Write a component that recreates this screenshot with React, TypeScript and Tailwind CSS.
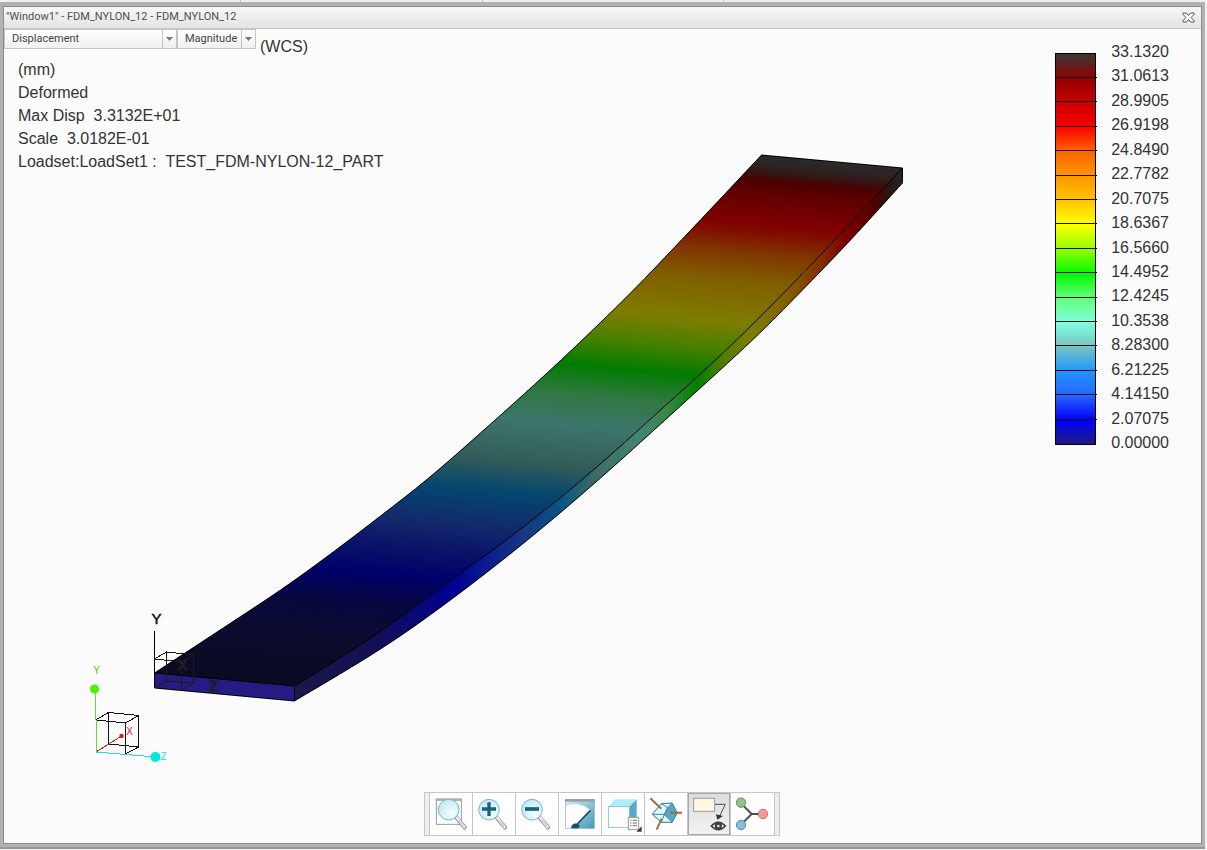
import React from "react";

type Point = [number, number];

const LEFT_EDGE: Point[] = [
  [154, 673], [215, 633], [280, 590], [330, 554], [380, 516], [427, 479],
  [480, 433], [552, 368], [623, 300], [680, 241], [761, 155],
];
const RIDGE: Point[] = [
  [294, 686], [370, 638], [460, 573], [507, 539], [580, 481],
  [660, 410], [736, 340], [820, 255], [902, 168],
];
const OUTER_EDGE: Point[] = [
  [294, 701], [380, 649], [450, 600], [527, 540], [600, 478],
  [680, 406], [752, 340], [800, 292], [850, 240], [902, 183],
];

function curve(points: Point[]): string {
  let d = "";
  for (let i = 0; i < points.length - 1; i++) {
    const p0 = points[Math.max(i - 1, 0)];
    const p1 = points[i];
    const p2 = points[i + 1];
    const p3 = points[Math.min(i + 2, points.length - 1)];
    d += ` C${p1[0] + (p2[0] - p0[0]) / 6},${p1[1] + (p2[1] - p0[1]) / 6} ${p2[0] - (p3[0] - p1[0]) / 6},${p2[1] - (p3[1] - p1[1]) / 6} ${p2[0]},${p2[1]}`;
  }
  return d;
}

const leftPath = `M154,673${curve(LEFT_EDGE)}`;
const ridgePath = `M294,686${curve(RIDGE)}`;
const outerPath = `M294,701${curve(OUTER_EDGE)}`;
const topFace = `${leftPath} L902,168${curve([...RIDGE].reverse())} Z`;
const sideFace = `${outerPath} L902,168${curve([...RIDGE].reverse())} Z`;

const TOP_STOPS: [number, string][] = [
  [86, "#2b2b2b"], [95, "#2c2525"], [104, "#341616"], [112, "#4c0000"], [128, "#640000"], [156, "#800000"],
  [166, "#801000"], [186, "#803600"], [216, "#806000"], [257, "#7d7d00"],
  [285, "#488000"], [313, "#007c00"], [342, "#307840"], [373, "#3c766c"],
  [415, "#335c58"], [447, "#04466e"], [483, "#122a6c"], [510, "#0a1468"],
  [539, "#00006a"], [573, "#08083e"], [609, "#0c0c2e"], [660, "#0a0a22"],
];

const SIDE_STOPS: [number, string][] = [
  [294, "#1c1848"], [380, "#120e58"], [453, "#000090"], [480, "#0a1690"], [519, "#163484"],
  [560, "#075484"], [594, "#3c6c68"], [638, "#428474"], [665, "#388848"],
  [696, "#008000"], [725, "#587c00"], [751, "#7d7d00"], [790, "#845a00"],
  [820, "#843000"], [844, "#800000"], [875, "#500000"], [888, "#2a1616"], [902, "#242424"],
];

function Scene() {
  return (
    <svg
      className="pointer-events-none absolute inset-0 h-full w-full"
      viewBox="4 29 1196 814"
      role="img"
      aria-label="Deformed beam displacement plot"
    >
      <defs>
        <linearGradient id="top" gradientUnits="userSpaceOnUse" x1="0" y1="86" x2="-51" y2="655">
          {TOP_STOPS.map(([v, c]) => (
            <stop key={v} offset={(v - 86) / 574} stopColor={c} />
          ))}
        </linearGradient>
        <linearGradient id="side" gradientUnits="userSpaceOnUse" x1="294" y1="0" x2="902" y2="0">
          {SIDE_STOPS.map(([x, c]) => (
            <stop key={x} offset={(x - 294) / 608} stopColor={c} />
          ))}
        </linearGradient>
      </defs>

      <g shapeRendering="crispEdges">
        <path d={topFace} fill="url(#top)" />
        <path d={sideFace} fill="url(#side)" />
        <path d="M154,673 L294,686 V701 L154,688 Z" fill="#241c82" />
      </g>
      <g fill="none" stroke="#000">
        <path d={`${leftPath} L902,168 V183`} />
        <path d={outerPath} />
        <path d={ridgePath} />
        <path d="M154,673 L294,686 V701 L154,688 Z" />
      </g>

      <g stroke="#1a1a1e" fill="none" shapeRendering="crispEdges">
        <path d="M153.500,631 V674" stroke="#000" />
        <path d="M154,659 L166,652 L193,655 L181,662 Z M166,652 V681 L193,683 V655 M181,662 V690 L193,683 M154,688 L166,681" />
      </g>
      <g fontFamily="Liberation Sans, sans-serif" textAnchor="middle">
        <text x="156" y="624" fontSize="15" fill="#111" stroke="#111" strokeWidth="0.500">Y</text>
        <text x="182" y="670" fontSize="14" fill="#222" stroke="#222">X</text>
        <text x="213" y="691" fontSize="14" fill="#1c1c22" stroke="#1c1c22">Z</text>
      </g>

      <g fill="none" shapeRendering="crispEdges">
        <path d="M95,720 L108,712.500 L138,715.500 L125,723 Z M108,713 V744 L138,747 V715 M125,723 V754 L138,747" stroke="#111" />
        <path d="M95.500,752 L121,736" stroke="#d02020" />
        <path d="M95,752 L155,757" stroke="#28dce6" />
        <path d="M94.500,689 V720 M95.500,720 V752" stroke="#5fe030" />
      </g>
      <circle cx="94" cy="689" r="4.500" fill="#4cf200" />
      <circle cx="155" cy="757" r="5" fill="#00e8dc" />
      <circle cx="121" cy="736" r="2.200" fill="#e01818" />
      <g fontFamily="Liberation Sans, sans-serif" fontSize="10" textAnchor="middle">
        <text x="96" y="674" fill="#52cc20">Y</text>
        <text x="129" y="735" fill="#d02020">X</text>
        <text x="163" y="760" fill="#28dce6">Z</text>
      </g>
    </svg>
  );
}

const LEVELS = [
  "33.1320", "31.0613", "28.9905", "26.9198", "24.8490", "22.7782", "20.7075", "18.6367",
  "16.5660", "14.4952", "12.4245", "10.3538", "8.28300", "6.21225", "4.14150", "2.07075", "0.00000",
];

const LEGEND_COLOURS = [
  "#383838", "#900000", "#c80000", "#fa0000", "#ff6400", "#ff9600", "#ffc400", "#ffff00",
  "#96ff00", "#00fa00", "#64ff78", "#80ffe0", "#78c4c4", "#1e96fa", "#2864ff", "#0000fa", "#201c82",
];

function Legend() {
  return (
    <div className="flex gap-[13px] pr-8 pt-[14px]">
      <svg className="mt-[10px] h-[392px] w-[43px]" viewBox="0 0 43 392" shapeRendering="crispEdges" aria-hidden="true">
        <defs>
          <linearGradient id="scale" x1="0" y1="0" x2="0" y2="1">
            {LEGEND_COLOURS.map((c, i) => (
              <stop key={c} offset={i / 16} stopColor={c} />
            ))}
          </linearGradient>
        </defs>
        <rect x="0.500" y="0.500" width="40" height="391" fill="url(#scale)" stroke="#000" />
        {LEVELS.slice(1, 16).map((l, i) => (
          <path key={l} d={`M0,${Math.floor((i + 1) * 24.4) + 0.5} H42`} stroke="#101010" />
        ))}
      </svg>
      <ol className="flex h-[409px] flex-col justify-between text-base leading-[18px] text-[#333]">
        {LEVELS.map((l) => (
          <li key={l}>{l}</li>
        ))}
      </ol>
    </div>
  );
}

function Picker({ label, options, className }: { label: string; options: string[]; className: string }) {
  return (
    <label className={`relative flex h-5 border border-[#c4c4c6] bg-linear-to-b from-white to-[#f0f0f1] ${className}`}>
      <select
        aria-label={label}
        className="w-full appearance-none bg-transparent pl-[7px] pr-4 font-[Roboto,sans-serif] text-[11px] leading-[18px] text-[#444] outline-none"
      >
        {options.map((o) => (
          <option key={o}>{o}</option>
        ))}
      </select>
      <span className="pointer-events-none absolute inset-y-0 right-0 flex w-[14px] items-center justify-center border-l border-[#c4c4c6]">
        <svg className="h-1 w-[7px]" viewBox="0 0 7 4" aria-hidden="true">
          <path d="M0,0 H7 L3.500,4 Z" fill="#77777c" />
        </svg>
      </span>
    </label>
  );
}

function Lens({ x, children }: { x: number; children?: React.ReactNode }) {
  return (
    <g>
      <path d={`M${x + 23},112 L${x + 48},142`} stroke="#969696" strokeWidth="13" strokeLinecap="round" />
      <path d={`M${x + 25},113 L${x + 47},141`} stroke="#ededed" strokeWidth="8" strokeLinecap="round" />
      <path d={`M${x + 31},120 L${x + 45},138`} stroke="#a4a4a4" strokeWidth="2" />
      <circle cx={x} cy="89" r="31" fill="url(#glass)" stroke="#76b4d0" strokeWidth="3" />
      {children}
    </g>
  );
}

const TOOLS: { name: string; box: string; icon: React.ReactNode; active?: boolean }[] = [
  {
    name: "Refit",
    box: "60 39 126 126",
    icon: (
      <g>
        <rect x="79" y="58" width="75" height="75" fill="#fff" stroke="#999" strokeWidth="3" />
        <rect x="77" y="55" width="79" height="8" fill="#b0b0b0" />
        <Lens x={116} />
      </g>
    ),
  },
  {
    name: "Zoom In",
    box: "189 39 126 126",
    icon: (
      <Lens x={237}>
        <path d="M237,67 V108 M216,87 H258" stroke="#17627c" strokeWidth="10" />
      </Lens>
    ),
  },
  {
    name: "Zoom Out",
    box: "318 39 126 126",
    icon: (
      <Lens x={366}>
        <path d="M345,87 H387" stroke="#17627c" strokeWidth="11" />
      </Lens>
    ),
  },
  {
    name: "Repaint",
    box: "447 39 126 126",
    icon: (
      <g>
        <rect x="467" y="60" width="86" height="85" fill="url(#paint)" stroke="#8cb4c0" strokeWidth="2" />
        <path d="M468,78 Q508,62 541,91 L497,135 L488,145 H468 Z" fill="#fff" />
        <rect x="465" y="57" width="89" height="8" fill="#9e9e9e" />
        <path d="M541,91 L502,132" stroke="#174c66" strokeWidth="5" />
        <path d="M483,145 C484,128 501,127 508,135 C511,140 505,145 501,145 Z" fill="#0c536e" />
      </g>
    ),
  },
  {
    name: "Display Style",
    box: "6 39 126 126",
    icon: (
      <g>
        <path d="M25,80 L45,58 H110 L88,80 Z" fill="#b0ecfb" />
        <path d="M88,80 L110,58 V122 L88,143 Z" fill="#5ba9c8" />
        <rect x="25" y="80" width="63" height="63" fill="#fff" stroke="#5ab4c6" strokeWidth="2" />
        <rect x="85" y="112" width="31" height="37" fill="#f8f8f8" stroke="#999" strokeWidth="3" />
        <path d="M98,121 H111 M98,129 H111 M98,137 H111" stroke="#777" strokeWidth="3" />
        <path d="M91,121 H94 M91,129 H94 M91,137 H94" stroke="#555" strokeWidth="3" />
        <path d="M125,139 V155 H109 Z" fill="#3a3a3a" />
      </g>
    ),
  },
  {
    name: "Datum Display",
    box: "138 39 126 126",
    icon: (
      <g strokeLinejoin="round">
        <path d="M187,71 L219,69 L234,99 L219,127 H187 L160,103 Z" fill="#e4f8ff" stroke="#237a9c" strokeWidth="3" />
        <path d="M206,83 L219,69 L234,99 L219,127 L196,104 Z" fill="#5ba5c6" stroke="#237a9c" strokeWidth="2" />
        <path d="M160,103 H196 M196,104 L206,83 M187,71 L206,83 M196,104 L187,127" stroke="#2d86a4" strokeWidth="3" fill="none" />
        <path d="M154,55 L187,86 M213,98 H249 M188,116 L173,149" stroke="#93743d" strokeWidth="6" />
      </g>
    ),
  },
  {
    name: "Annotation Display",
    box: "266 39 126 126",
    active: true,
    icon: (
      <g>
        <rect x="283" y="55" width="63" height="39" fill="#fff8e2" stroke="#9b9b9b" strokeWidth="3" />
        <path d="M347,73 H378 L361,108" stroke="#4d4d4d" strokeWidth="3" fill="none" />
        <path d="M350,103 L371,108 L354,119 Z" fill="#333" />
        <path d="M336,138 Q357,116 378,138 Q357,160 336,138 Z" fill="#fff" stroke="#3e3e44" strokeWidth="5" />
        <circle cx="357" cy="138" r="11" fill="#3e3e44" />
        <circle cx="357" cy="138" r="4" fill="#ddd" />
      </g>
    ),
  },
  {
    name: "Spin Center",
    box: "396 39 126 126",
    icon: (
      <g strokeWidth="3">
        <path d="M426,70 L458,102 L426,134 M458,102 H490" stroke="#4c4c50" strokeWidth="6" fill="none" />
        <circle cx="426" cy="68" r="14" fill="#8fc283" stroke="#648c5c" />
        <circle cx="426" cy="135" r="14" fill="#88bfda" stroke="#528ca8" />
        <circle cx="492" cy="102" r="14" fill="#f79a94" stroke="#cc6864" />
      </g>
    ),
  },
];

function Toolbar() {
  return (
    <div role="toolbar" aria-label="View" className="flex h-11 border border-[#c6c6c8] bg-[#eeeef1]">
      <svg className="absolute h-0 w-0" aria-hidden="true">
        <defs>
          <radialGradient id="glass" cx="0.65" cy="0.7" r="0.8">
            <stop offset="0" stopColor="#f4fdff" />
            <stop offset="1" stopColor="#bfe6f5" />
          </radialGradient>
          <linearGradient id="paint" x1="0" y1="0" x2="1" y2="1">
            <stop offset="0" stopColor="#d5eff6" />
            <stop offset="1" stopColor="#4597b6" />
          </linearGradient>
        </defs>
      </svg>
      <div className="mx-1 flex border-x border-[#c6c6c8]">
        {TOOLS.map((t, i) => (
          <button
            key={t.name}
            type="button"
            aria-label={t.name}
            title={t.name}
            aria-pressed={t.active}
            className={`flex w-[43px] items-center justify-center ${i < 7 ? "border-r border-[#c6c6c8]" : ""} ${
              t.active ? "bg-linear-to-b from-[#dcdcde] to-[#f2f2f3] inset-ring inset-ring-[#a8a8a8]" : "bg-white"
            }`}
          >
            <svg className="size-[42px]" viewBox={t.box} fill="none" aria-hidden="true">
              {t.icon}
            </svg>
          </button>
        ))}
      </div>
    </div>
  );
}

export default function App() {
  return (
    <div className="flex min-h-screen flex-col bg-[#f1f1f3] font-['Liberation_Sans',Arial,sans-serif]">
      <div className="flex h-[2px] bg-[#f1f1f3]">
        <div className="w-1/5 border-r border-[#c4c4c6]" />
        <div className="w-1/5 border-r border-[#c4c4c6]" />
        <div className="w-1/5 border-r border-[#c4c4c6]" />
      </div>
      <div className="mb-px mr-[2px] flex grow flex-col border-b-2 border-[#989898] bg-[#b2b2b2] px-[3px] pb-[3px] pt-1">
        <section className="flex grow flex-col border border-[#8c8c8c] bg-[#fbfbfb]">
          <header className="flex h-[22px] items-center justify-between border-b border-[#c6c6c8] bg-linear-to-b from-[#f8f8f8] to-[#e3e3e5] pl-[2px] pr-[6px]">
            <h1 className="font-[Roboto,sans-serif] text-[11px] text-[#505050]">"Window1" - FDM_NYLON_12 - FDM_NYLON_12</h1>
            <button type="button" aria-label="Close" className="flex">
              <svg className="h-[11px] w-[13px]" viewBox="0 0 13 11" aria-hidden="true">
                <path
                  d="M1,1 H4.500 L6.500,3.500 L8.500,1 H12 V2.500 L9,5.500 L12,8.500 V10 H8.500 L6.500,7.500 L4.500,10 H1 V8.500 L4,5.500 L1,2.500 Z"
                  fill="#fff"
                  stroke="#55555a"
                />
              </svg>
            </button>
          </header>
          <main className="relative flex grow flex-col">
            <Scene />
            <div className="relative flex grow items-start justify-between">
              <div>
                <div className="flex items-start">
                  <Picker label="Quantity" options={["Displacement", "Stress", "Strain"]} className="w-[173px]" />
                  <Picker label="Component" options={["Magnitude", "X", "Y", "Z"]} className="w-[79px]" />
                  <span className="pl-1 pt-2 text-base leading-5 text-[#333]">(WCS)</span>
                </div>
                <div className="whitespace-pre pl-[14px] pt-px text-base leading-[23px] text-[#333]">
                  <p>(mm)</p>
                  <p>Deformed</p>
                  <p>{"Max Disp  3.3132E+01"}</p>
                  <p>{"Scale  3.0182E-01"}</p>
                  <p>{"Loadset:LoadSet1 :  TEST_FDM-NYLON-12_PART"}</p>
                </div>
              </div>
              <Legend />
            </div>
            <div className="relative flex justify-center pb-[7px] pr-[2px]">
              <Toolbar />
            </div>
          </main>
        </section>
      </div>
    </div>
  );
}
